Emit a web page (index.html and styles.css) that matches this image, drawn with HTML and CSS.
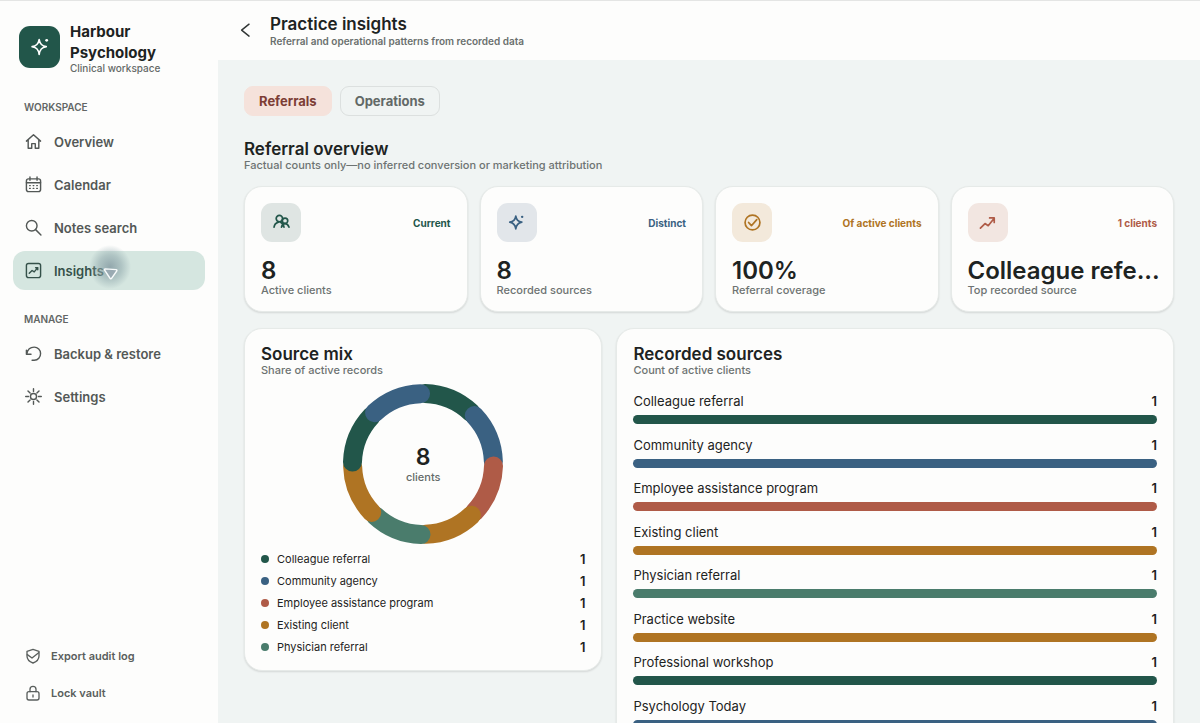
FILE: index.html
```
<!DOCTYPE html>
<html lang="en">
<head>
<meta charset="utf-8">
<meta name="viewport" content="width=device-width, initial-scale=1">
<title>Practice insights</title>
<link rel="stylesheet" href="styles.css">
</head>
<body>
<svg class="defs" aria-hidden="true">
  <symbol id="sparkle" viewBox="0 0 24 24"><path d="M11 3c.8 5.500 3 7.700 8.500 8.500C14 12.500 11.800 14.700 11 21c-.8-6.300-3-8.500-8.500-9.500C8 10.700 10.200 8.500 11 3z"/><circle class="dot-fill" cx="20" cy="4" r="1.700"/></symbol>
</svg>
<div class="app">
  <aside class="sidebar">
    <div class="brand">
      <span class="brand-mark"><svg class="icon" viewBox="0 0 24 24"><use href="#sparkle"/></svg></span>
      <div>
        <div class="brand-name">Harbour Psychology</div>
        <div class="brand-sub">Clinical workspace</div>
      </div>
    </div>
    <nav class="nav">
      <h2 class="nav-title">WORKSPACE</h2>
      <a class="nav-item" href="#"><svg class="icon" viewBox="0 0 24 24"><path d="M2 11.500 12 2.500l10 9M4.500 10v11.500h5V15h5v6.500h5V10"/></svg>Overview</a>
      <a class="nav-item" href="#"><svg class="icon" viewBox="0 0 24 24"><rect x="2" y="4" width="20" height="18" rx="3"/><path d="M2 9.500h20M7 1.500V6M17 1.500V6"/><path d="M6.500 13.500h11M6.500 17.500h11" stroke-dasharray="1 4" stroke-width="1.800"/></svg>Calendar</a>
      <a class="nav-item" href="#"><svg class="icon" viewBox="0 0 24 24"><circle cx="9.500" cy="9.500" r="7.500"/><path d="m15 15 7.500 7.500"/></svg>Notes search</a>
      <a class="nav-item active" href="#" aria-current="page"><svg class="icon" viewBox="0 0 24 24"><rect x="2" y="2" width="20" height="20" rx="3"/><path d="m6 16 4-4 3 2 5-6M15 8h3v3"/></svg>Insights
        <span class="pointer"><svg viewBox="0 0 24 24"><path d="M4.500 5.500 20 6.500a1.200 1.200 0 0 1 .8 2L13.500 19a1.200 1.200 0 0 1-2.100-.3L3.500 7a1.100 1.100 0 0 1 1-1.500z"/></svg></span>
      </a>
      <h2 class="nav-title manage">MANAGE</h2>
      <a class="nav-item" href="#"><svg class="icon" viewBox="0 0 24 24"><path d="M2 7.500V13h6.500M2.500 12.500C3.500 7 7.500 3 13 3c5 0 9 4 9 9s-3.500 9.500-9 9.500h-3"/></svg>Backup &amp; restore</a>
      <a class="nav-item" href="#"><svg class="icon" viewBox="0 0 24 24"><circle cx="12" cy="12" r="4.300"/><path d="M12 1v4M12 19v4M1 12h4M19 12h4M4.200 4.200l3 3M16.800 16.800l3 3M4.200 19.800l3-3M16.800 7.200l3-3"/></svg>Settings</a>
    </nav>
    <div class="side-foot">
      <button class="foot-item" type="button"><svg class="icon" viewBox="0 0 24 24"><path d="M12 2 3 5v7c0 5 3.500 8.500 9 10.500 5.500-2 9-5.500 9-10.500V5z"/><path d="m3.500 10 7 5L20.500 7"/></svg>Export audit log</button>
      <button class="foot-item" type="button"><svg class="icon" viewBox="0 0 24 24"><rect x="3" y="10" width="18" height="12.500" rx="3"/><path d="M7.500 10V6.500a4.500 4.500 0 0 1 9 0V10M12 15v3"/></svg>Lock vault</button>
    </div>
  </aside>
  <div class="page">
    <header class="topbar">
      <button class="back" type="button" aria-label="Back"><svg class="icon" viewBox="0 0 24 24"><path d="m17 3-10.500 8.500L17 20"/></svg></button>
      <div>
        <h1 class="title">Practice insights</h1>
        <p class="tagline">Referral and operational patterns from recorded data</p>
      </div>
    </header>
    <main class="content">
      <div class="tabs">
        <button class="tab selected" type="button">Referrals</button>
        <button class="tab" type="button">Operations</button>
      </div>
      <h2 class="heading">Referral overview</h2>
      <p class="sub">Factual counts only—no inferred conversion or marketing attribution</p>
      <section class="stats">
        <article class="card stat green">
          <div class="stat-top"><span class="badge"><svg class="icon" viewBox="0 0 24 24"><circle cx="9" cy="6.500" r="4.500"/><circle cx="17" cy="9.500" r="3.800"/><path d="M1.500 18.500c.5-3.500 3-6 6-7M11 12c2.500 1 4 3.500 4.500 6.500M12 18.500c.5-3 2.500-5 5-5s4.500 2 5.500 5"/></svg></span><span class="note">Current</span></div>
          <div class="value">8</div><div class="label">Active clients</div>
        </article>
        <article class="card stat blue">
          <div class="stat-top"><span class="badge"><svg class="icon" viewBox="0 0 24 24"><use href="#sparkle"/></svg></span><span class="note">Distinct</span></div>
          <div class="value">8</div><div class="label">Recorded sources</div>
        </article>
        <article class="card stat ochre">
          <div class="stat-top"><span class="badge"><svg class="icon" viewBox="0 0 24 24"><circle cx="12" cy="12" r="10.500"/><path d="m6.500 12 4 4.500L18 8"/></svg></span><span class="note">Of active clients</span></div>
          <div class="value">100%</div><div class="label">Referral coverage</div>
        </article>
        <article class="card stat red">
          <div class="stat-top"><span class="badge"><svg class="icon" viewBox="0 0 24 24"><path d="m2 20 6.500-6.500 4.500 3 8.500-10.500M15 5.500h6.500V12"/></svg></span><span class="note">1 clients</span></div>
          <div class="value">Colleague refe...</div><div class="label">Top recorded source</div>
        </article>
      </section>
      <section class="panels">
        <article class="card">
          <h2 class="heading">Source mix</h2>
          <p class="sub">Share of active records</p>
          <div class="donut">
            <svg viewBox="0 0 160 160" aria-hidden="true">
              <g fill="none" stroke-width="19" stroke-linecap="round">
                <path stroke="#22564a" d="M82 9.500A70.500 70.500 0 0 1 128 28.500"/>
                <path stroke="#3a6182" d="M82 9.500A70.500 70.500 0 0 1 128 28.500" transform="rotate(45 80 80)"/>
                <path stroke="#af5b47" d="M82 9.500A70.500 70.500 0 0 1 128 28.500" transform="rotate(90 80 80)"/>
                <path stroke="#af7423" d="M82 9.500A70.500 70.500 0 0 1 128 28.500" transform="rotate(135 80 80)"/>
                <path stroke="#4a7c6c" d="M82 9.500A70.500 70.500 0 0 1 128 28.500" transform="rotate(180 80 80)"/>
                <path stroke="#af7423" d="M82 9.500A70.500 70.500 0 0 1 128 28.500" transform="rotate(225 80 80)"/>
                <path stroke="#22564a" d="M82 9.500A70.500 70.500 0 0 1 128 28.500" transform="rotate(270 80 80)"/>
                <path stroke="#3a6182" d="M82 9.500A70.500 70.500 0 0 1 128 28.500" transform="rotate(315 80 80)"/>
              </g>
            </svg>
            <div class="donut-text"><strong>8</strong><span>clients</span></div>
          </div>
          <ul class="legend">
            <li class="green"><i></i><span>Colleague referral</span><b>1</b></li>
            <li class="blue"><i></i><span>Community agency</span><b>1</b></li>
            <li class="red"><i></i><span>Employee assistance program</span><b>1</b></li>
            <li class="ochre"><i></i><span>Existing client</span><b>1</b></li>
            <li class="teal"><i></i><span>Physician referral</span><b>1</b></li>
          </ul>
        </article>
        <article class="card">
          <h2 class="heading">Recorded sources</h2>
          <p class="sub">Count of active clients</p>
          <ul class="bars">
            <li class="green"><span>Colleague referral</span><b>1</b><i></i></li>
            <li class="blue"><span>Community agency</span><b>1</b><i></i></li>
            <li class="red"><span>Employee assistance program</span><b>1</b><i></i></li>
            <li class="ochre"><span>Existing client</span><b>1</b><i></i></li>
            <li class="teal"><span>Physician referral</span><b>1</b><i></i></li>
            <li class="ochre"><span>Practice website</span><b>1</b><i></i></li>
            <li class="green"><span>Professional workshop</span><b>1</b><i></i></li>
            <li class="blue"><span>Psychology Today</span><b>1</b><i></i></li>
          </ul>
        </article>
      </section>
    </main>
  </div>
</div>
</body>
</html>
```
FILE: styles.css
```
* { box-sizing: border-box; margin: 0; padding: 0; }
body { font-family: Inter, "Liberation Sans", sans-serif; color: #1d2322; background: #f0f4f3; }
button { font: inherit; border: 0; background: none; cursor: pointer; }
a { color: inherit; text-decoration: none; }
ul { list-style: none; }
.defs { position: absolute; width: 0; height: 0; }
.icon { width: 17px; height: 17px; flex: none; fill: none; stroke: currentColor; stroke-width: 2; stroke-linecap: round; stroke-linejoin: round; }
.dot-fill { fill: currentColor; stroke: none; }

.app { display: flex; height: 100vh; overflow: hidden; border-top: 1px solid #e4e5e4; }
.sidebar { width: 218px; flex: none; display: flex; flex-direction: column; padding: 20px 13px 12px; background: #fdfdfc; }
.brand { display: flex; align-items: center; gap: 10px; padding-left: 6px; }
.brand-mark { display: grid; place-items: center; flex: none; width: 41px; height: 42px; border-radius: 11px; background: #22564a; color: #fff; }
.brand-mark .icon { width: 20px; height: 20px; }
.brand-name { font-size: 15px; line-height: 21px; font-weight: 700; }
.brand-sub { font-size: 10px; line-height: 10px; font-weight: 500; color: #646967; }

.nav-title { margin: 25px 0 6px 11px; font-size: 10px; line-height: 18px; font-weight: 600; color: #626665; }
.nav-title.manage { margin: 20px 0 6px 11px; }
.nav-item { position: relative; display: flex; align-items: center; gap: 12px; height: 39px; margin-bottom: 4px; padding-left: 12px; border-radius: 12px; font-size: 13px; font-weight: 600; color: #535856; }
.nav-item.active { background: #d5e6e0; color: #35514a; margin-bottom: 0; }
.pointer { position: absolute; left: 76px; top: -6px; width: 42px; height: 44px; background: radial-gradient(closest-side, #8298a0cc, #8fa7ab88 55%, #a9c2c100); }
.pointer svg { position: absolute; left: 13px; top: 20px; width: 17px; height: 17px; fill: #9aaab2; stroke: #f8fbfb; stroke-width: 2; }
.side-foot { margin-top: auto; display: grid; }
.foot-item { display: flex; align-items: center; gap: 10px; height: 37px; padding-left: 12px; font-size: 11px; font-weight: 600; color: #5a5f5d; }
.foot-item .icon { width: 16px; height: 16px; }

.page { flex: 1; min-width: 0; display: flex; flex-direction: column; }
.topbar { display: flex; flex: none; align-items: center; gap: 16px; height: 59px; padding: 0 18px; background: #fdfdfc; }
.back { display: grid; place-items: center; width: 18px; height: 32px; color: #303534; }
.title { font-size: 17px; line-height: 20px; font-weight: 600; }
.tagline { font-size: 10px; line-height: 14px; font-weight: 600; color: #6a706e; }
.content { flex: 1; min-height: 0; overflow: hidden; padding: 26px; }

.tabs { display: flex; gap: 8px; margin-bottom: 24px; }
.tab { height: 30px; padding: 0 14px; border: 1px solid #dce0df; border-radius: 9px; font-size: 13px; font-weight: 700; color: #626967; }
.tab.selected { border-color: #f5e2db; background: #f5e2db; color: #7c3d35; }
.heading { font-size: 17px; line-height: 19px; font-weight: 600; }
.sub { font-size: 11px; line-height: 13px; font-weight: 500; color: #6d7372; }

.card { min-width: 0; padding: 16px; border: 1px solid #e6eae8; border-radius: 18px; background: #fdfdfc; box-shadow: 0 1px 2px #0000001f; }
.stats { display: grid; grid-template-columns: repeat(4, minmax(0, 1fr)); gap: 12px; margin: 14px 0 16px; }
.stat { padding-bottom: 14px; }
.stat-top { display: flex; align-items: center; justify-content: space-between; margin-bottom: 15px; }
.badge { display: grid; place-items: center; width: 40px; height: 39px; border-radius: 11px; color: var(--tone); background: var(--tint); }
.badge .icon { stroke-width: 2.400; }
.note { font-size: 10px; font-weight: 700; color: var(--tone); }
.value { white-space: nowrap; font-size: 24px; line-height: 27px; font-weight: 600; }
.label { font-size: 11px; line-height: 13px; font-weight: 500; color: #6d7372; }
.green { --tone: #22564a; --tint: #dfe5e3; }
.blue { --tone: #3a6182; --tint: #e2e6ea; }
.ochre { --tone: #af7423; --tint: #f3e9db; }
.red { --tone: #af5b47; --tint: #f2e6e1; }
.teal { --tone: #4a7c6c; }

.panels { display: grid; grid-template-columns: 9fr 14fr; gap: 14px; align-items: start; }
.panels .card { padding-bottom: 12px; }
.donut { display: grid; place-items: center; margin: 7px 0 4px; }
.donut > * { grid-area: 1 / 1; }
.donut svg { width: 160px; height: 160px; }
.donut-text { display: grid; justify-items: center; }
.donut-text strong { font-size: 23px; line-height: 26px; font-weight: 600; }
.donut-text span { font-size: 11px; line-height: 14px; font-weight: 500; color: #646a69; }
.legend li { display: flex; align-items: center; gap: 8px; height: 22px; font-size: 11px; }
.legend i { width: 8px; height: 8px; border-radius: 50%; background: var(--tone); }
.legend b { margin-left: auto; font-size: 13px; font-weight: 600; }
.bars { display: grid; align-content: space-between; min-height: 336px; margin-top: 16px; }
.bars li { display: grid; grid-template-columns: 1fr auto; row-gap: 5px; font-size: 13px; line-height: 17px; }
.bars b { font-weight: 600; }
.bars i { grid-column: 1 / -1; height: 9px; border-radius: 5px; background: var(--tone); }
```
